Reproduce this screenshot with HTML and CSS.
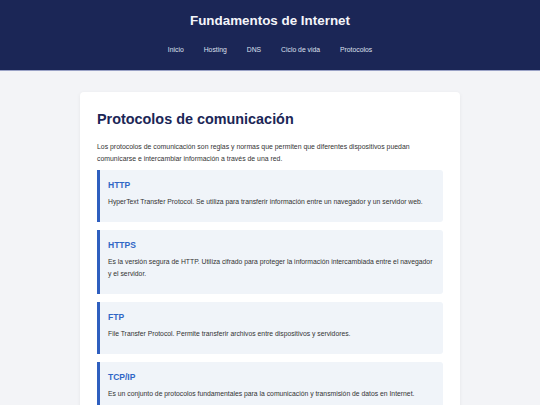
FILE: index.html
```html
<!DOCTYPE html>
<html lang="es">
<head>
<meta charset="utf-8">
<title>Fundamentos de Internet</title>
<link rel="stylesheet" href="styles.css">
</head>
<body>
<header class="site-header">
  <h1 class="site-title">Fundamentos de Internet</h1>
  <nav class="site-nav">
    <a href="#">Inicio</a>
    <a href="#">Hosting</a>
    <a href="#">DNS</a>
    <a href="#">Ciclo de vida</a>
    <a href="#">Protocolos</a>
  </nav>
</header>
<main class="card">
  <h2 class="card-title">Protocolos de comunicación</h2>
  <p class="intro">Los protocolos de comunicación son reglas y normas que permiten que diferentes dispositivos puedan comunicarse e intercambiar información a través de una red.</p>
  <section class="proto">
    <h3>HTTP</h3>
    <p>HyperText Transfer Protocol. Se utiliza para transferir información entre un navegador y un servidor web.</p>
  </section>
  <section class="proto">
    <h3>HTTPS</h3>
    <p>Es la versión segura de HTTP. Utiliza cifrado para proteger la información intercambiada entre el navegador y el servidor.</p>
  </section>
  <section class="proto">
    <h3>FTP</h3>
    <p>File Transfer Protocol. Permite transferir archivos entre dispositivos y servidores.</p>
  </section>
  <section class="proto">
    <h3>TCP/IP</h3>
    <p>Es un conjunto de protocolos fundamentales para la comunicación y transmisión de datos en Internet.</p>
  </section>
</main>
</body>
</html>
```
FILE: styles.css
```css
html, body {
  margin: 0;
  padding: 0;
}
body {
  background: #f3f4f7;
  font-family: "Liberation Sans", Arial, sans-serif;
  color: #333;
}
.site-header {
  background: #1b2656;
  border-bottom: 1px solid #9aa2c6;
  height: 70px;
  display: flex;
  flex-direction: column;
  align-items: center;
}
.site-title {
  margin: 13px 0 0;
  font-size: 13.4px;
  line-height: 16px;
  font-weight: bold;
  color: #f4f5fa;
}
.site-nav {
  margin-top: 16px;
  display: flex;
  gap: 20px;
}
.site-nav a {
  color: #dde0ee;
  text-decoration: none;
  font-size: 6.8px;
  line-height: 10px;
}
.card {
  display: block;
  width: 380px;
  box-sizing: border-box;
  margin: 21px auto 0;
  background: #ffffff;
  border-radius: 4px;
  box-shadow: 0 1px 4px rgba(0, 0, 0, 0.06);
  padding: 19px 17px 10px;
}
.card-title {
  margin: 0 0 13px;
  font-size: 14.4px;
  line-height: 17px;
  font-weight: bold;
  color: #1b2656;
}
.intro {
  margin: 0 0 5px;
  font-size: 6.9px;
  line-height: 12px;
  color: #333;
}
.proto {
  background: #f0f4f9;
  border-left: 3px solid #2f5fbf;
  border-radius: 0 3px 3px 0;
  padding: 10px 10px 10px 8px;
  margin-bottom: 8px;
}
.proto h3 {
  margin: 0 0 6px;
  font-size: 8.5px;
  line-height: 10px;
  font-weight: bold;
  color: #2f66c6;
}
.proto p {
  margin: 0 0 4px;
  font-size: 6.8px;
  line-height: 12px;
  color: #333;
}
```
